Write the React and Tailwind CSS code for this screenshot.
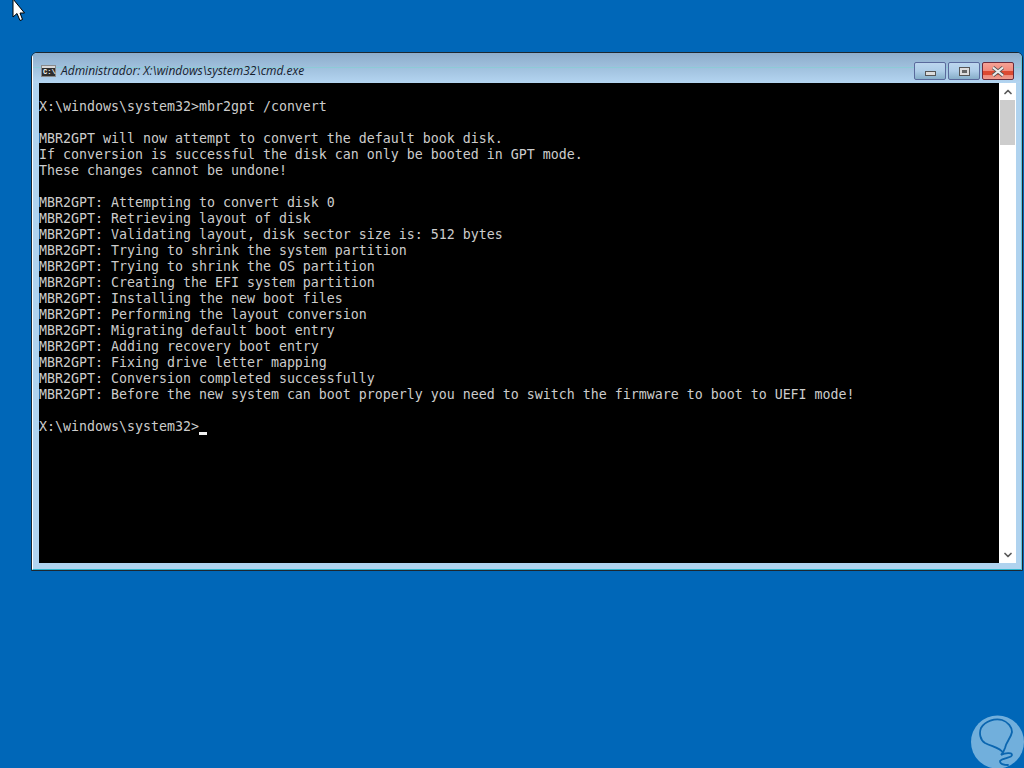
import { ChevronDown, ChevronUp } from "lucide-react";

const lines = [
  "",
  "X:\\windows\\system32>mbr2gpt /convert",
  "",
  "MBR2GPT will now attempt to convert the default book disk.",
  "If conversion is successful the disk can only be booted in GPT mode.",
  "These changes cannot be undone!",
  "",
  "MBR2GPT: Attempting to convert disk 0",
  "MBR2GPT: Retrieving layout of disk",
  "MBR2GPT: Validating layout, disk sector size is: 512 bytes",
  "MBR2GPT: Trying to shrink the system partition",
  "MBR2GPT: Trying to shrink the OS partition",
  "MBR2GPT: Creating the EFI system partition",
  "MBR2GPT: Installing the new boot files",
  "MBR2GPT: Performing the layout conversion",
  "MBR2GPT: Migrating default boot entry",
  "MBR2GPT: Adding recovery boot entry",
  "MBR2GPT: Fixing drive letter mapping",
  "MBR2GPT: Conversion completed successfully",
  "MBR2GPT: Before the new system can boot properly you need to switch the firmware to boot to UEFI mode!",
  "",
];

function CmdIcon() {
  return (
    <div className="w-[15px] h-[12px] bg-[#2e2e2e] border border-[#8a8a8a] flex flex-col">
      <div className="h-[2px] bg-[#d8d8d8]" />
      <div className="text-[7px] leading-[8px] font-bold text-white font-['Liberation_Mono',monospace] pl-[1px]">C:\</div>
    </div>
  );
}

export default function App() {
  return (
    <div className="relative w-[1024px] h-[768px] overflow-hidden bg-[#0067b8]">
      {/* mouse pointer */}
      <svg className="absolute left-[12px] top-0" width="14" height="23" viewBox="0 0 14 23">
        <path d="M1 -1 V17 L5 13.5 L8 20.5 L10.5 19.5 L8 13 L12.5 13 Z" fill="#fff" stroke="#000" strokeWidth="1" />
      </svg>

      {/* cmd window */}
      <div className="absolute left-[31px] top-[52px] w-[992px] h-[519px] rounded-t-[6px] border border-[#1c2730] overflow-hidden">
        <div className="h-full flex flex-col border-l border-r border-b border-l-white border-r-[#5fc4d8] border-b-[#2fb4cc] bg-[#b0d3ef]">
          <div className="relative h-[30px] shrink-0 bg-gradient-to-b from-[#8dadcb] to-[#b4d5f1] flex items-center pt-[6px] pl-[8px] pr-[7px]">
            <div className="absolute left-0 right-0 top-[14px] h-px bg-[#8ccbd6]" />
            <div className="relative flex items-center w-full">
              <CmdIcon />
              <span className="ml-[5px] text-[12px] italic text-[#16212e] font-['Open_Sans','Liberation_Sans',sans-serif]">
                Administrador: X:\windows\system32\cmd.exe
              </span>
              <div className="ml-auto flex gap-[2px]">
                <div className="w-[32px] h-[18px] rounded-[2px] border border-[#5a6a9c] bg-gradient-to-b from-[#bcd6ee] via-[#aecde8] to-[#86aec8] flex items-end justify-center pb-[3px]">
                  <div className="w-[11px] h-[5px] bg-[#dcdcdc] border border-[#555]" />
                </div>
                <div className="w-[32px] h-[18px] rounded-[2px] border border-[#5a6a9c] bg-gradient-to-b from-[#bcd6ee] via-[#aecde8] to-[#86aec8] flex items-center justify-center">
                  <div className="w-[11px] h-[9px] bg-[#dcdcdc] border border-[#555] flex items-center justify-center">
                    <div className="w-[5px] h-[3px] bg-[#666]" />
                  </div>
                </div>
                <div className="w-[32px] h-[18px] rounded-[2px] border border-[#6b2a3a] bg-[linear-gradient(to_bottom,#f5a295_0%,#f1897b_50%,#dc4a32_52%,#dc4a32_75%,#ee8b7c_78%,#f09c8e_100%)] flex items-center justify-center">
                  <svg width="14" height="11" viewBox="0 0 14 11">
                    <path d="M2 1.5 L12 9.5 M12 1.5 L2 9.5" stroke="#555" strokeWidth="3.6" />
                    <path d="M2 1.5 L12 9.5 M12 1.5 L2 9.5" stroke="#ececec" strokeWidth="2.2" />
                  </svg>
                </div>
              </div>
            </div>
          </div>

          <div className="flex ml-[6px] h-[480px]">
            <div className="w-[960px] h-[480px] bg-black text-[#cccccc] font-['DejaVu_Sans_Mono',monospace] text-[13.29px] leading-[16px] whitespace-pre overflow-hidden">
              {lines.map((line, i) => (
                <div key={i} className="h-[16px]">{line}</div>
              ))}
              <div className="h-[16px] flex">
                <span>X:\windows\system32&gt;</span>
                <span className="w-[8px] h-[3px] bg-[#f0f0f0] mt-[13px]" />
              </div>
            </div>

            <div className="w-[17px] h-[480px] bg-white flex flex-col">
              <div className="h-[17px] flex items-center justify-center">
                <ChevronUp size={12} strokeWidth={3.5} className="text-[#5a5a5a]" />
              </div>
              <div className="h-[45px] ml-[1px] mr-[1px] bg-[#cdcdcd]" />
              <div className="flex-1" />
              <div className="h-[17px] flex items-center justify-center">
                <ChevronDown size={12} strokeWidth={3.5} className="text-[#5a5a5a]" />
              </div>
            </div>
          </div>
        </div>
      </div>

      {/* watermark */}
      <svg className="absolute left-[971px] top-[715px]" width="53" height="53" viewBox="0 0 53 53">
        <circle cx="26.5" cy="27" r="26.5" fill="#71afdc" />
        <path d="M32 38 C30 33 22 32 14 28 C9 25 8 18 10 13 C14 6 24 3 31 5 C37 7 41 12 41 17 C40 23 35 27 34 33 C33 36 32 38 30 40 C34 38 41 37 41 40 C41 43 31 43 29 46 C29 49 33 50 37 50"
          fill="none" stroke="#0b66b0" strokeWidth="1.8" strokeLinecap="round" />
      </svg>
    </div>
  );
}
